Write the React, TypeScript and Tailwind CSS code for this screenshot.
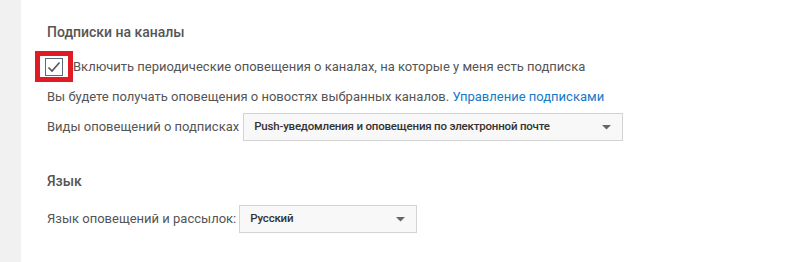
import React from "react";

function Arrow() {
  return (
    <svg width="9" height="5" viewBox="0 0 9 5" className="shrink-0">
      <path d="M0 0 L9 0 L4.5 4.5 Z" fill="#666" />
    </svg>
  );
}

export default function App() {
  return (
    <div
      className="flex w-[800px] h-[262px] bg-white overflow-hidden"
      style={{ fontFamily: "Roboto, 'Noto Sans', Arial, sans-serif" }}
    >
      <div className="w-[21px] shrink-0 bg-[#f1f1f1]" />
      <div className="flex flex-col pl-[26px] pt-[23px] text-[13px] text-[#555]">
        <div className="text-[14px] font-medium text-[#555] leading-[18px]">Подписки на каналы</div>
        <div className="flex items-center mt-[10px] -ml-[12px] h-[31px]">
          <div className="w-[38px] h-[31px] border-[5px] border-[#e01b24] flex items-center justify-center bg-white">
            <div className="w-[18px] h-[18px] border border-[#5a6b7c] flex items-center justify-center">
              <svg width="14" height="12" viewBox="0 0 14 12">
                <path d="M1.5 6.5 L5 10 L12.5 1.5" stroke="#555" strokeWidth="1.6" fill="none" />
              </svg>
            </div>
          </div>
          <span className="leading-[18px]">
            Включить периодические оповещения о каналах, на которые у меня есть подписка
          </span>
        </div>
        <div className="mt-[6px] leading-[18px]">
          Вы будете получать оповещения о новостях выбранных каналов.{" "}
          <span className="text-[#167ac6]">Управление подписками</span>
        </div>
        <div className="flex items-center mt-[7px]">
          <span className="leading-[18px]">Виды оповещений о подписках</span>
          <div className="ml-[4px] w-[380px] h-[28px] bg-[#f8f8f8] border border-[#d3d3d3] flex items-center justify-between pl-[10px] pr-[11px]">
            <span className="text-[11.5px] font-medium text-[#333]" style={{ letterSpacing: "-0.2px" }}>
              Push-уведомления и оповещения по электронной почте
            </span>
            <Arrow />
          </div>
        </div>
        <div className="mt-[31px] text-[14px] font-medium text-[#555] leading-[18px]">Язык</div>
        <div className="flex items-center mt-[15px]">
          <span className="leading-[18px]">Язык оповещений и рассылок:</span>
          <div className="ml-[3px] w-[178px] h-[28px] bg-[#f8f8f8] border border-[#d3d3d3] flex items-center justify-between pl-[10px] pr-[11px]">
            <span className="text-[11.5px] font-medium text-[#333]" style={{ letterSpacing: "-0.2px" }}>Русский</span>
            <Arrow />
          </div>
        </div>
      </div>
    </div>
  );
}
